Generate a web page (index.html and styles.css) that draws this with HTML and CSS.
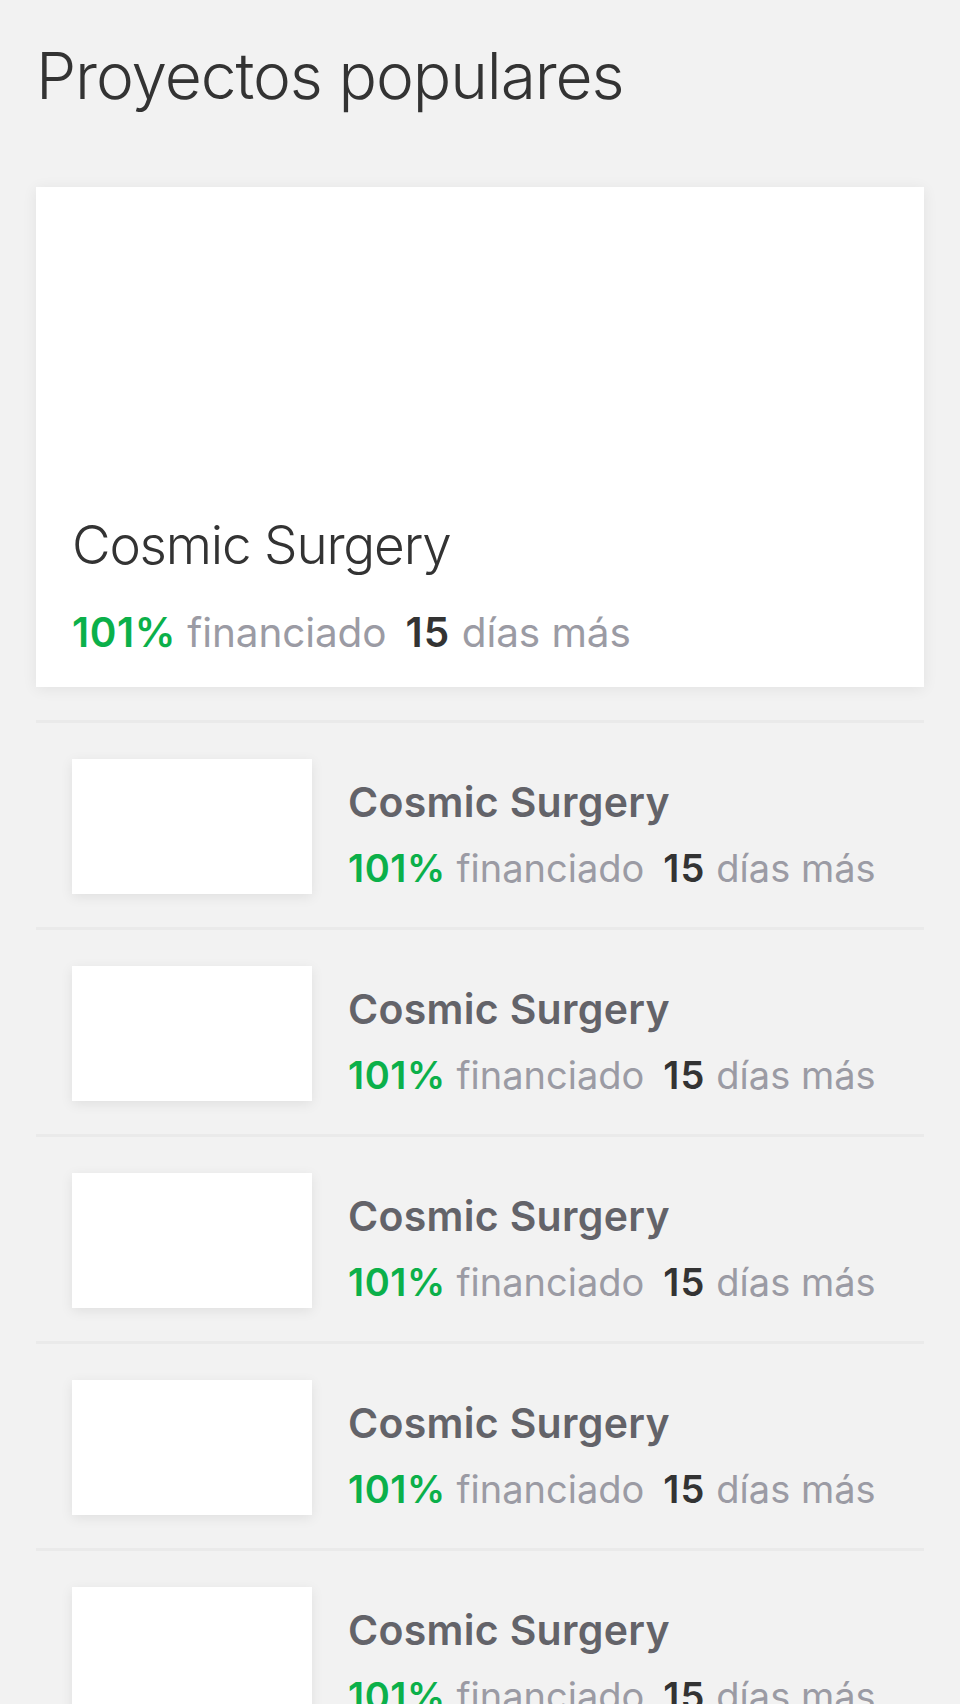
FILE: index.html
```html
<!DOCTYPE html>
<html lang="es">
<head>
<meta charset="utf-8">
<title>Proyectos populares</title>
<link rel="stylesheet" href="styles.css">
</head>
<body>
<main class="page">
  <h1 class="page-title">Proyectos populares</h1>

  <article class="feature">
    <div class="feature-body">
      <h2 class="feature-title">Cosmic Surgery</h2>
      <p class="stats stats-lg"><span class="pct">101%</span> financiado<span class="days"><b>15</b> días más</span></p>
    </div>
  </article>

  <ul class="list">
    <li class="row">
      <div class="thumb"></div>
      <div class="row-text">
        <h3 class="row-title">Cosmic Surgery</h3>
        <p class="stats stats-sm"><span class="pct">101%</span> financiado<span class="days"><b>15</b> días más</span></p>
      </div>
    </li>
    <li class="row">
      <div class="thumb"></div>
      <div class="row-text">
        <h3 class="row-title">Cosmic Surgery</h3>
        <p class="stats stats-sm"><span class="pct">101%</span> financiado<span class="days"><b>15</b> días más</span></p>
      </div>
    </li>
    <li class="row">
      <div class="thumb"></div>
      <div class="row-text">
        <h3 class="row-title">Cosmic Surgery</h3>
        <p class="stats stats-sm"><span class="pct">101%</span> financiado<span class="days"><b>15</b> días más</span></p>
      </div>
    </li>
    <li class="row">
      <div class="thumb"></div>
      <div class="row-text">
        <h3 class="row-title">Cosmic Surgery</h3>
        <p class="stats stats-sm"><span class="pct">101%</span> financiado<span class="days"><b>15</b> días más</span></p>
      </div>
    </li>
    <li class="row">
      <div class="thumb"></div>
      <div class="row-text">
        <h3 class="row-title">Cosmic Surgery</h3>
        <p class="stats stats-sm"><span class="pct">101%</span> financiado<span class="days"><b>15</b> días más</span></p>
      </div>
    </li>
  </ul>
</main>
</body>
</html>
```

FILE: styles.css
```css
html, body {
  margin: 0;
  padding: 0;
  background: #f2f2f2;
}

body {
  font-family: "Inter", "Liberation Sans", sans-serif;
  color: #333333;
}

.page {
  padding: 38px 36px 0;
}

.page-title {
  margin: 0;
  font-size: 64px;
  line-height: 76px;
  font-weight: 300;
  letter-spacing: -1.1px;
  color: #333333;
}

.feature {
  margin-top: 73px;
  height: 500px;
  background: #ffffff;
  box-shadow: 0 2px 14px rgba(0, 0, 0, 0.07);
  display: flex;
  flex-direction: column;
  justify-content: flex-end;
}

.feature-body {
  padding: 0 36px 30px;
}

.feature-title {
  margin: 0 0 32px;
  font-size: 53px;
  line-height: 64px;
  font-weight: 300;
  letter-spacing: -1.2px;
  color: #333333;
}

.stats {
  margin: 0;
  color: #9b9ba4;
  font-weight: 400;
  letter-spacing: 0;
}

.stats-lg {
  font-size: 40.5px;
  line-height: 48px;
  letter-spacing: -0.1px;
}

.stats-sm {
  font-size: 38px;
  line-height: 48px;
}

.pct {
  color: #0bb04a;
  font-weight: 600;
  letter-spacing: 0.6px;
}

.days {
  margin-left: 19px;
}

.days b {
  color: #333333;
  font-weight: 600;
  letter-spacing: 1.2px;
}

.list {
  list-style: none;
  margin: 33px 0 0;
  padding: 0;
}

.row {
  display: flex;
  align-items: flex-start;
  gap: 36px;
  padding: 36px 0 33px 36px;
  border-top: 3px solid #eaeaea;
}

.thumb {
  flex: none;
  width: 240px;
  height: 135px;
  background: #ffffff;
  box-shadow: 0 3px 12px rgba(0, 0, 0, 0.08);
}

.row-text {
  padding-top: 19px;
}

.row-title {
  margin: 0 0 18px;
  font-size: 41px;
  line-height: 48px;
  font-weight: 600;
  letter-spacing: 0.3px;
  color: #636369;
}
```
